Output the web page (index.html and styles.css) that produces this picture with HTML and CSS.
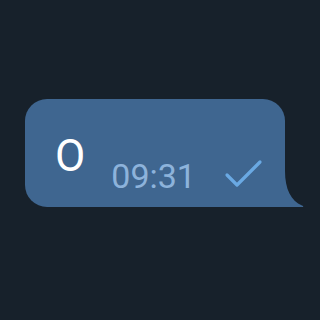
FILE: index.html
```html
<!DOCTYPE html>
<html>
<head>
<meta charset="utf-8">
<link rel="stylesheet" href="styles.css">
</head>
<body>
<div class="chat">
  <div class="bubble">
    <span class="msg">O</span>
    <span class="time">09:31</span>
    <svg class="check" width="40" height="32" viewBox="0 0 40 32">
      <path d="M4 19 L14 29 L37 6" fill="none" stroke="#6aa9e3" stroke-width="3.2" stroke-linecap="round" stroke-linejoin="round"/>
    </svg>
    <svg class="tail" width="20" height="36" viewBox="0 0 20 36">
      <path d="M0 0 C0 18 6 30 17 34.5 C19 35.3 18.5 36 17 36 L0 36 Z" fill="#3f6690"/>
    </svg>
  </div>
</div>
</body>
</html>
```

FILE: styles.css
```css
html, body {
  margin: 0;
  padding: 0;
  background: #17212b;
  width: 320px;
  height: 320px;
  overflow: hidden;
}
.chat {
  padding: 99px 0 0 25px;
}
.bubble {
  position: relative;
  width: 260px;
  height: 108px;
  box-sizing: border-box;
  background: #3f6690;
  border-radius: 22px 22px 0 22px;
  display: flex;
  align-items: flex-start;
  padding-left: 30px;
  font-family: Roboto, "Noto Sans", sans-serif;
}
.msg {
  margin-top: 35px;
  font-size: 44px;
  line-height: 44px;
  color: #ffffff;
}
.time {
  margin-top: 60px;
  margin-left: 26px;
  font-size: 34px;
  line-height: 34px;
  color: #8db3db;
}
.check {
  margin-top: 57px;
  margin-left: 27px;
}
.tail {
  position: absolute;
  left: 260px;
  bottom: 0;
}
```
